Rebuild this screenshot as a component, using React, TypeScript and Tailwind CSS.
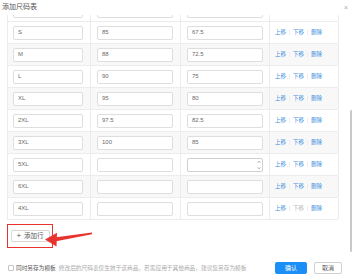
import React from 'react';

type Row = { size: string; chest: string; length: string; spinner?: boolean; last?: boolean };

// first row is scrolled almost out of view, only its bottom edge shows
const ROWS: Row[] = [
  { size: '', chest: '', length: '' },
  { size: 'S', chest: '85', length: '67.5' },
  { size: 'M', chest: '88', length: '72.5' },
  { size: 'L', chest: '90', length: '75' },
  { size: 'XL', chest: '95', length: '80' },
  { size: '2XL', chest: '97.5', length: '82.5' },
  { size: '3XL', chest: '100', length: '85' },
  { size: '5XL', chest: '', length: '', spinner: true },
  { size: '6XL', chest: '', length: '' },
  { size: '4XL', chest: '', length: '', last: true },
];

function Cell({ value, width, spinner }: { value: string; width: string; spinner?: boolean }) {
  return (
    <div
      className={`relative h-[14px] ${width} rounded-[2px] border bg-white flex items-center pl-[4px] text-[6px] text-[#6a6a6a] ${
        spinner ? 'border-[#cfcfcf]' : 'border-[#dedede]'
      }`}
    >
      {value}
      {spinner && (
        <div className="absolute right-[1px] top-[1px] bottom-[1px] w-[5px] flex flex-col items-center justify-between text-[#999]">
          <svg width="4" height="4" viewBox="0 0 4 4">
            <path d="M0.5 3 L2 1 L3.5 3" fill="none" stroke="currentColor" strokeWidth="0.6" />
          </svg>
          <svg width="4" height="4" viewBox="0 0 4 4">
            <path d="M0.5 1 L2 3 L3.5 1" fill="none" stroke="currentColor" strokeWidth="0.6" />
          </svg>
        </div>
      )}
    </div>
  );
}

function Actions({ last }: { last?: boolean }) {
  return (
    <div className="flex items-center pl-[5px] text-[5.5px] text-[#3c8de0]">
      <span>上移</span>
      <span className="mx-[3px] h-[5px] w-px bg-[#eeeeee]" />
      <span className={last ? 'text-[#b5b5b5]' : ''}>下移</span>
      <span className="mx-[3px] h-[5px] w-px bg-[#eeeeee]" />
      <span>删除</span>
    </div>
  );
}

export default function App() {
  return (
    <div
      className="relative w-[352px] h-[280px] bg-white overflow-hidden flex flex-col"
      style={{ fontFamily: '"Liberation Sans", "Noto Sans CJK SC", sans-serif' }}
    >
      <div className="relative z-10 h-[15px] shrink-0 bg-white flex items-center justify-between pl-[2px] pr-[4px]">
        <span className="text-[7px] text-[#555]">添加尺码表</span>
        <span className="text-[7px] leading-none text-[#aaa]">×</span>
      </div>

      <div className="h-[241px] shrink-0 overflow-hidden">
        <div className="-mt-[15px] ml-[7px] w-[331px] border-l border-[#ececec]">
          {ROWS.map((r, i) => (
            <div
              key={i}
              className={`grid grid-cols-[83px_90px_89px_69px] h-[22px] border-b border-[#ececec] ${
                i % 2 === 0 && i > 0 ? 'bg-[#f8f8f8]' : 'bg-white'
              }`}
            >
              <div className="flex items-center pl-[5px] border-r border-[#ececec]">
                <Cell value={r.size} width="w-[70px]" />
              </div>
              <div className="flex items-center pl-[6px] border-r border-[#ececec]">
                <Cell value={r.chest} width="w-[76px]" />
              </div>
              <div className="flex items-center pl-[6px] border-r border-[#ececec]">
                <Cell value={r.length} width="w-[76px]" spinner={r.spinner} />
              </div>
              <div className="flex items-center border-r border-[#ececec]">
                {i > 0 && <Actions last={r.last} />}
              </div>
            </div>
          ))}
        </div>

        <div className="ml-[7px] mt-[4px] w-[46px] h-[24px] border-[1.5px] border-[#e8332e] flex items-center justify-center">
          <button className="w-[39px] h-[12px] rounded-[2px] border border-[#d9d9d9] bg-white flex items-center justify-center gap-[3px] text-[6.5px] text-[#555]">
            <span className="text-[8px] leading-none font-light">+</span>
            <span>添加行</span>
          </button>
        </div>
      </div>

      <div className="flex-1 flex items-center justify-between pl-[8px] pr-[10px]">
        <div className="flex items-center">
          <span className="w-[6px] h-[6px] border border-[#c4c4c4] rounded-[1px] bg-white" />
          <span className="ml-[2px] text-[5.7px] text-[#555]">同时另存为模板</span>
          <span className="ml-[3px] text-[5.7px] text-[#aaa]">
            修改后的尺码表仅生效于该商品，若需应用于其他商品，建议您另存为模板
          </span>
        </div>
        <div className="flex items-center gap-[7px]">
          <button className="w-[32px] h-[12px] rounded-[2px] bg-[#1b8ff5] text-white text-[6px] flex items-center justify-center">
            确认
          </button>
          <button className="w-[28px] h-[12px] rounded-[2px] border border-[#d0d0d0] bg-white text-[#555] text-[6px] flex items-center justify-center">
            取消
          </button>
        </div>
      </div>

      <div className="absolute right-0 top-[110px] w-[2px] h-[142px] bg-[#c9c9c9] rounded-full" />

      <svg className="absolute left-0 top-0 pointer-events-none" width="352" height="280" viewBox="0 0 352 280">
        <polygon points="92,232.5 92,234.3 56,241.2 56,237.2" fill="#e8332e" />
        <polygon points="45,239.6 57,232.8 56.5,246.5" fill="#e8332e" />
      </svg>
    </div>
  );
}
